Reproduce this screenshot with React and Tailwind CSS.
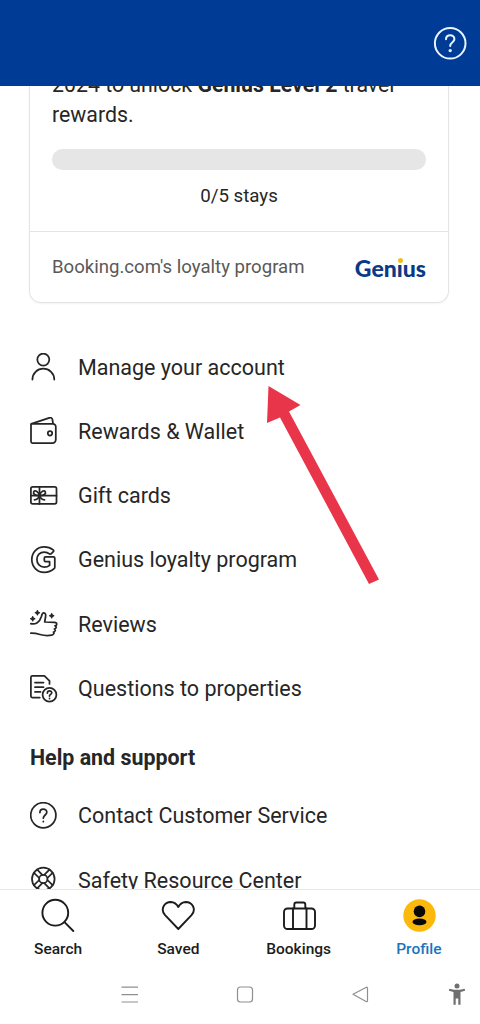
import React from 'react';

const Icon = ({ children }) => (
  <svg
    className="h-7 w-7 shrink-0"
    viewBox="0 0 28 28"
    fill="none"
    stroke="currentColor"
    strokeWidth="1.75"
    strokeLinecap="round"
    strokeLinejoin="round"
  >
    {children}
  </svg>
);

const PersonIcon = () => (
  <Icon>
    <circle cx="13.3" cy="6.6" r="6" />
    <path d="M2.400 26.500c0-6.200 4.900-10.800 10.900-10.800s11 4.600 11 10.800" />
  </Icon>
);

const WalletIcon = () => (
  <Icon>
    <path d="M1 7v17.500a1.500 1.500 0 0 0 1.500 1.500H22.500a3.300 3.300 0 0 0 3.300-3.300V9.800a3 3 0 0 0-3-3H1.200L19.300.8c1.600-.5 2.900.2 3.100 1.700l.7 4.300" />
    <circle cx="20" cy="16.300" r="2.200" />
  </Icon>
);

const GiftCardIcon = () => (
  <Icon>
    <rect x=".9" y="4.800" width="25.600" height="17" rx="1.800" />
    <path d="M1 13.700h25.500M9.500 5v17" />
    <path d="M9.500 13.700C8.500 9 4.500 7.700 3.700 9.700s1.300 4 5.800 4zM9.500 13.700c1-4.700 5-6 5.800-4s-1.300 4-5.800 4zM9.500 13.700c-1 2.500-2.700 4-5 4.200M9.500 13.700c1 2.500 2.700 4 5 4.200" />
  </Icon>
);

const GeniusIcon = () => (
  <Icon>
    <path d="M23.200 3.900C20.500 1.800 17.400.9 14.200.9 7 .9 1.800 6.500 1.800 13.500S7 26.300 14.200 26.300c4 0 7.300-1.300 9.900-3.700.5-.4.7-.8.7-1.400V12.200c0-.8-.5-1.300-1.300-1.300H15.600c-.8 0-1.300.5-1.300 1.300v2c0 .8.500 1.300 1.300 1.300h4v3.900c-1.500 1.200-3.300 1.700-5.300 1.700-4.400 0-7.400-3.300-7.400-7.600s3-7.500 7.300-7.500c2 0 3.900.6 5.300 1.800.6.500 1.300.4 1.800-.1l2-2c.6-.6.6-1.200-.1-1.800z" />
  </Icon>
);

const ReviewsIcon = () => (
  <Icon>
    <path d="M.8 13.700c4.500 1.200 9-1.500 10.700-7.500.5-2.200.8-3.400 2.300-3.300 1.700.1 2.100 1.700 1.800 3.600l-.9 5.500 9.800.4c3 .2 2.800 3.200.4 3.400 1.900.4 1.700 3-.6 3.200 1.500.5 1.200 2.900-.9 3 1 .7.500 2.900-1.700 3.200-3.700.7-8.700.2-11.700-.7-3.300-1-5.700-1.400-9.200-1.300" />
    <path
      fill="currentColor"
      strokeWidth="1.100"
      d="M2.700 6.600l.7 1.500 1.500.7-1.500.7-.7 1.500L2 9.500.5 8.800 2 8.100zM7.400.5l.7 1.500 1.500.7-1.500.7-.7 1.500-.7-1.500-1.500-.7 1.500-.7zM21.700 3.600l.7 1.500 1.500.7-1.500.7-.7 1.500-.7-1.500-1.500-.7 1.500-.7z"
    />
  </Icon>
);

const QuestionsIcon = () => (
  <Icon>
    <path d="M9.800 22.500H2.400a1.500 1.500 0 0 1-1.500-1.500V2.400A1.500 1.500 0 0 1 2.400.9h12l5.100 5v3M5 7.500h8.500M5 12.200h8.500M5 16.900h5.500" />
    <circle cx="19.500" cy="19.700" r="6.900" />
    <path d="M17.400 18c0-3 4.400-2.800 4.300-.2 0 1.700-2.200 1.500-2.200 3.200M19.500 23.400v.1" />
  </Icon>
);

const HelpIcon = () => (
  <Icon>
    <circle cx="13.300" cy="13.300" r="12.600" />
    <path d="M9.900 10.500c0-4.500 6.900-4.500 6.900-.3 0 2.700-3.500 2.900-3.500 6M13.300 19.400v.3" />
  </Icon>
);

// life buoy: two rings joined by four diagonal bands
const SafetyIcon = () => (
  <Icon>
    <circle cx="13.300" cy="13" r="11.300" />
    <circle cx="13.300" cy="13" r="4.200" />
    <path d="M17.400 14l5.200 5.100M14.300 17.100l5.100 5.200M9.200 14L4 19.100M12.300 17.100l-5.100 5.200M17.400 12l5.200-5.100M14.300 8.900l5.100-5.200M9.200 12L4 6.900M12.300 8.900L7.200 3.700" />
  </Icon>
);

const accountItems = [
  { label: 'Manage your account', icon: PersonIcon },
  { label: 'Rewards & Wallet', icon: WalletIcon },
  { label: 'Gift cards', icon: GiftCardIcon },
  { label: 'Genius loyalty program', icon: GeniusIcon },
  { label: 'Reviews', icon: ReviewsIcon },
  { label: 'Questions to properties', icon: QuestionsIcon },
];

const helpItems = [
  { label: 'Contact Customer Service', icon: HelpIcon },
  { label: 'Safety Resource Center', icon: SafetyIcon },
];

function MenuList({ items }) {
  return (
    <ul>
      {items.map(({ label, icon: ItemIcon }) => (
        <li key={label} className="flex h-[64.300px] items-center gap-5 pl-[30px]">
          <ItemIcon />
          <span className="pt-px text-[21.500px]">{label}</span>
        </li>
      ))}
    </ul>
  );
}

function GeniusCard() {
  return (
    <section className="mr-[31px] ml-[29px] -mt-4 rounded-b-xl border border-t-0 border-[#e4e4e4] shadow-xs">
      <div className="px-[22px] pb-5">
        <p className="text-[21.300px] leading-[30px] whitespace-nowrap">
          2024 to unlock <b>Genius Level 2</b> travel
          <br />
          rewards.
        </p>
        <div className="mt-[19px] h-[21px] rounded-full bg-[#e6e6e6]" />
        <p className="mt-[11px] text-center text-[18.700px] leading-[30px]">
          0/5 stays
        </p>
      </div>
      <div className="flex h-[71px] items-center justify-between border-t border-[#e4e4e4] px-[22px] pt-0.5">
        <span className="text-[18.600px] text-[#595959]">
          Booking.com's loyalty program
        </span>
        <span className="font-['Lato'] text-[23px] leading-none font-black text-[#0a3a85]">
          Gen
          <span className="relative">
            ı
            <span className="absolute top-[4px] left-[1px] h-[5px] w-[5px] rounded-full bg-[#f0bd20]" />
          </span>
          us
        </span>
      </div>
    </section>
  );
}

function Tab({ label, active, children }) {
  return (
    <div
      className={`flex flex-col items-center gap-[5px] ${
        active ? 'text-[#1a75c0]' : 'text-[#1c1c1c]'
      }`}
    >
      <svg
        className="h-9 w-9"
        viewBox="0 0 36 36"
        fill="none"
        stroke="currentColor"
        strokeWidth="1.900"
        strokeLinecap="round"
        strokeLinejoin="round"
      >
        {children}
      </svg>
      <span className="text-[15.500px] leading-5 font-medium">{label}</span>
    </div>
  );
}

function App() {
  return (
    <div className="relative flex h-[1024px] w-[480px] flex-col overflow-hidden bg-white font-['Roboto',sans-serif] text-[#262626]">
      <header className="flex h-[86px] shrink-0 items-center justify-end bg-[#003b95] pr-[13px] text-[#e8f4ff]">
        <svg
          className="h-[34px] w-[34px]"
          viewBox="0 0 34 34"
          fill="none"
          stroke="currentColor"
          strokeWidth="2"
          strokeLinecap="round"
        >
          <circle cx="17.200" cy="17.300" r="15.300" />
          <path d="M13 13.200c.1-5.300 8.600-5.200 8.400-.1-.1 3.500-4.200 3.500-4.200 6.800" />
          <circle cx="17.200" cy="24.600" r=".7" fill="currentColor" />
        </svg>
      </header>

      <main className="min-h-0 flex-1 overflow-hidden">
        <GeniusCard />
        <div className="pt-8">
          <MenuList items={accountItems} />
        </div>
        <h2 className="flex h-[63px] items-center pt-3 pl-[30px] text-[21.400px] font-bold">
          Help and support
        </h2>
        <MenuList items={helpItems} />
      </main>

      <nav className="-mx-0.5 grid h-[79px] shrink-0 grid-cols-4 border-t border-[#e6e6e6] pt-2 pr-[3px]">
        <Tab label="Search">
          <circle cx="15.300" cy="14.700" r="12.900" />
          <path d="M24.500 24.200l8.800 8.800" />
        </Tab>
        <Tab label="Saved">
          <path d="M18.300 31L5.100 17.200C-.2 11 4.500 4 10.800 4c3.300.1 5.900 2 7.500 5 1.600-3 4.200-4.900 7.500-5 6.300 0 11 7 5.700 13.200z" />
        </Tab>
        <Tab label="Bookings">
          <rect x="3" y="10.500" width="31" height="20.500" rx="3.500" />
          <path d="M12 10.500V30.500M25.500 10.500V30.500M13.300 10.200V6.500a2 2 0 0 1 2-2h7a2 2 0 0 1 2 2v3.700" />
        </Tab>
        <Tab label="Profile" active>
          <circle cx="18.500" cy="17.500" r="16.200" fill="#fbb90d" stroke="none" />
          <circle cx="18.500" cy="13.400" r="5.800" fill="#080808" stroke="none" />
          <ellipse cx="18.500" cy="23.900" rx="7" ry="3.400" fill="#080808" stroke="none" />
        </Tab>
      </nav>

      <footer className="flex h-[56px] shrink-0 pl-[120px] text-[#8f8f8f]">
        <svg
          className="h-[52px] w-[360px]"
          viewBox="120 968 360 52"
          fill="none"
          stroke="currentColor"
          strokeWidth="1.200"
          strokeLinejoin="round"
        >
          <path d="M121.500 987.200h16.500M121.500 994.700h16.500M121.500 1002h16.500" />
          <rect x="237.500" y="987" width="15" height="15" rx="3" />
          <path d="M353 994.200l13.500-7q1 0 1 1v12.500q0 1-1 1z" />
          <g fill="#6f6f6f" stroke="none">
            <circle cx="457" cy="986" r="2.500" />
            <path d="M449.300 988.700l4.700 1.100h6l4.700-1.100.4 2-4.600 1.400v12.600h-2.200v-6.200h-2.600v6.200h-2.200v-12.600l-4.600-1.400z" />
          </g>
        </svg>
      </footer>

      {/* callout arrow over the menu */}
      <svg
        className="absolute top-[380px] left-[260px] h-[210px] w-[130px]"
        viewBox="260 380 130 210"
        fill="#e93549"
      >
        <path d="M268.500 386l32 19-11.500 6.500 90 168-10 4.500-89-166.500-13 5.500z" />
      </svg>
    </div>
  );
}

export default App;
